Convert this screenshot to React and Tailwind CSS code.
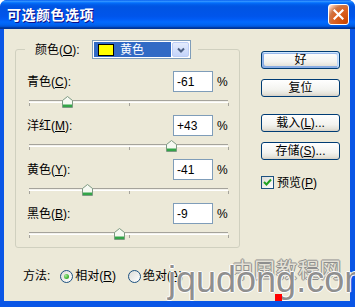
import React from 'react'

const FONT = "font-['Liberation_Sans','Noto_Sans_CJK_SC',sans-serif]"

const rows = [
  { name: '青色', key: 'C', value: -61 },
  { name: '洋红', key: 'M', value: 43 },
  { name: '黄色', key: 'Y', value: -41 },
  { name: '黑色', key: 'B', value: -9 },
]

const Thumb = () => (
  <svg width="11" height="12" viewBox="0 0 11 12" className="block">
    <path d="M0.5 4.5 L5.5 0.5 L10.5 4.5 V11.5 H0.5 Z" fill="#f6f9f2" stroke="#7d9a82" />
    <rect x="1" y="8.5" width="9" height="2.5" fill="#33a548" />
  </svg>
)

const Slider = ({ value }) => {
  const offset = ((value + 100) / 200) * 199
  return (
    <div className="relative ml-[2px] w-[199px] h-[23px] pt-[8px]">
      <div className="h-[3px] border-t border-[#a5a39b] border-b border-b-white bg-[#f3f2ec]" />
      <div className="flex justify-between w-[200px]">
        <div className="w-px h-[3px] bg-[#a5a39b]" />
        <div className="w-px h-[3px] bg-[#a5a39b]" />
        <div className="w-px h-[3px] bg-[#a5a39b]" />
      </div>
      <div className="absolute top-[4px]" style={{ left: `${offset - 5.5}px` }}>
        <Thumb />
      </div>
    </div>
  )
}

const XpButton = ({ children, primary }) => (
  <div
    className={`h-[18px] w-[79px] flex items-center justify-center border border-[#003c74] rounded-[3px] bg-[linear-gradient(to_bottom,#ffffff_0%,#f3f3ef_60%,#e5e3da_86%,#d6d0c5_100%)] leading-none ${
      primary
        ? 'shadow-[inset_-1px_1px_#cee7ff,inset_1px_2px_#98b8ea,inset_-2px_2px_#bcd4f6,inset_1px_-1px_#89ade4,inset_2px_-2px_#89ade4]'
        : ''
    }`}
  >
    {children}
  </div>
)

const Radio = ({ checked }) => (
  <div className="w-[13px] h-[13px] rounded-full border border-[#1c5180] bg-[linear-gradient(135deg,#dcdcd7_0%,#ffffff_100%)] flex items-center justify-center">
    {checked && <div className="w-[5px] h-[5px] rounded-full bg-[radial-gradient(circle_at_35%_35%,#a9e6a1_0%,#4fbf3f_50%,#1f8e1a_100%)]" />}
  </div>
)

export default function App() {
  return (
    <div className={`relative w-[355px] h-[307px] flex flex-col bg-[#0a56e6] rounded-t-[7px] overflow-hidden text-[12px] text-black ${FONT}`}>
      {/* title bar */}
      <div className="h-[29px] shrink-0 flex items-center justify-between pl-[7px] pr-[6px] bg-[linear-gradient(to_bottom,#0058ee_0%,#3593ff_4%,#288eff_6%,#127dff_8%,#036ffc_10%,#0262ee_14%,#0057e5_20%,#0054e3_24%,#0055eb_56%,#005bf5_66%,#026afe_76%,#0062ef_86%,#0052d6_92%,#0040ab_94%,#003092_100%)]">
        <span className="text-white font-bold text-[14px] leading-none tracking-[0.5px] [text-shadow:1px_1px_#0f1089]">可选颜色选项</span>
        <div className="w-[21px] h-[21px] rounded-[3px] border border-white flex items-center justify-center bg-[radial-gradient(circle_at_90%_90%,#cc4600_0%,#dc6527_55%,#cd7546_70%,#ffccb2_90%,#ffffff_100%)]">
          <svg width="11" height="11" viewBox="0 0 11 11">
            <path d="M1.5 1.5 L9.5 9.5 M9.5 1.5 L1.5 9.5" stroke="white" strokeWidth="2.2" strokeLinecap="square" />
          </svg>
        </div>
      </div>

      {/* body */}
      <div className="flex-1 ml-[4px] mr-[5px] mb-[6px] bg-[#ece9d8] flex flex-col">
        <div className="flex">
          <fieldset className="ml-[11px] mt-[11px] w-[225px] border border-[#d0d0bf] rounded-[3px] px-[11px] pb-0">
            <legend className="ml-[-2px] pl-[10px] pr-[7px]">
              <div className="flex items-center h-[19px]">
                <span className="w-[57px] leading-none">
                  颜色(<u>O</u>):
                </span>
                <div className="w-[99px] h-[19px] border border-[#7f9db9] bg-white flex items-center p-px">
                  <div className="flex-1 h-[15px] bg-[#316ac5] flex items-center pl-[4px]">
                    <div className="w-[16px] h-[12px] bg-[#ffff00] border border-black" />
                    <span className="ml-[6px] text-white leading-none">黄色</span>
                  </div>
                  <div className="ml-px w-[17px] h-[15px] rounded-[2px] border border-[#bccdf5] bg-[linear-gradient(to_bottom,#e4ecfd_0%,#c4d4fa_100%)] flex items-center justify-center">
                    <svg width="8" height="6" viewBox="0 0 8 6">
                      <path d="M1 1.5 L4 4.5 L7 1.5" stroke="#4d6185" strokeWidth="2" fill="none" />
                    </svg>
                  </div>
                </div>
              </div>
            </legend>
            <div className="pt-[12px] flex flex-col">
              {rows.map((r) => (
                <div key={r.key} className="flex flex-col h-[44px]">
                  <div className="flex items-center h-[21px] shrink-0">
                    <span className="flex-1 leading-none">
                      {r.name}(<u>{r.key}</u>):
                    </span>
                    <div className="w-[40px] h-[21px] border border-[#7f9db9] bg-white flex items-center pl-[3px] leading-none">
                      {r.value > 0 ? `+${r.value}` : r.value}
                    </div>
                    <span className="ml-[4px] w-[11px] leading-none">%</span>
                  </div>
                  <Slider value={r.value} />
                </div>
              ))}
            </div>
          </fieldset>

          <div className="ml-[21px] mt-[22px] flex flex-col">
            <XpButton primary>好</XpButton>
            <div className="mt-[10px]">
              <XpButton>复位</XpButton>
            </div>
            <div className="mt-[17px]">
              <XpButton>
                载入(<u>L</u>)...
              </XpButton>
            </div>
            <div className="mt-[10px]">
              <XpButton>
                存储(<u>S</u>)...
              </XpButton>
            </div>
            <div className="mt-[16px] flex items-center">
              <div className="w-[13px] h-[13px] border border-[#1c5180] bg-[linear-gradient(135deg,#dcdcd7_0%,#ffffff_100%)] flex items-center justify-center">
                <svg width="9" height="9" viewBox="0 0 9 9">
                  <path d="M1 4 L3.5 6.5 L8 1.5" stroke="#21a121" strokeWidth="2" fill="none" />
                </svg>
              </div>
              <span className="ml-[3px] leading-none">
                预览(<u>P</u>)
              </span>
            </div>
          </div>
        </div>

        <div className="mt-[21px] ml-[19px] flex items-center h-[14px]">
          <span className="leading-none">方法:</span>
          <div className="ml-[10px]">
            <Radio checked />
          </div>
          <span className="ml-[2px] leading-none">
            相对(<u>R</u>)
          </span>
          <div className="ml-[12px]">
            <Radio />
          </div>
          <span className="ml-[2px] leading-none">
            绝对(<u>A</u>)
          </span>
        </div>
      </div>

      {/* watermark overlay */}
      <div className="pointer-events-none absolute left-[232px] top-[258px] text-[21px] leading-none tracking-[1px] text-[#e4e1d6] [text-shadow:-1px_0_#8e8e8e,1px_0_#8e8e8e,0_-1px_#8e8e8e,0_1px_#8e8e8e] font-['Noto_Sans_CJK_SC',sans-serif]">
        中国教程网
      </div>
      <div className="pointer-events-none absolute left-[168px] top-[262px] text-[36px] leading-none font-['Liberation_Sans',sans-serif] text-[#8f8f8f] [text-shadow:-1px_0_#ffffff,1px_0_#ffffff,0_-1px_#ffffff,0_1px_#ffffff]">
        jqudong.com
      </div>
      <div className="pointer-events-none absolute left-[275px] top-[294px] w-[7px] h-[7px] bg-[#ff0000]" />
    </div>
  )
}
